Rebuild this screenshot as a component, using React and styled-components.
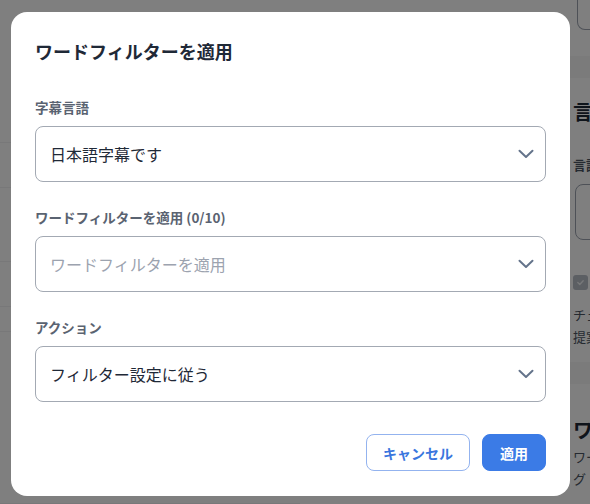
import React from "react";
import styled, { createGlobalStyle } from "styled-components";

const Global = createGlobalStyle`
  html, body { margin: 0; padding: 0; background: #ffffff; }
  body { font-family: "Noto Sans CJK JP", "Noto Sans", sans-serif; }
  * { box-sizing: border-box; }
`;

const Page = styled.div`
  width: 590px;
  height: 504px;
  display: flex;
  overflow: hidden;
  background: #ffffff;
`;

const LeftList = styled.div`
  width: 300px;
  display: flex;
  flex-direction: column;
  padding-top: 56px;
`;

const ListRow = styled.div`
  height: ${(p) => p.$h}px;
  border-bottom: 1px solid #f0f0f2;
`;

const Spacer = styled.div`
  flex: 1;
`;

const RightPanel = styled.div`
  margin-left: auto;
  width: 20px;
  display: flex;
  flex-direction: column;
  padding-left: 3px;
  overflow: hidden;
  white-space: nowrap;
  color: #1f2937;
`;

const TopBox = styled.div`
  height: 30px;
  margin-left: 4px;
  width: 40px;
  border: 1px solid #9ca3af;
  border-top: none;
  border-radius: 0 0 8px 8px;
  margin-bottom: 26px;
`;

const Band = styled.div`
  height: 22px;
  margin-left: -3px;
  width: 40px;
  background: #f6f6f7;
  margin-bottom: ${(p) => p.$mb}px;
`;

const PanelHeading = styled.div`
  font-size: 20px;
  font-weight: 700;
  line-height: 26px;
  margin-bottom: ${(p) => p.$mb}px;
`;

const PanelText = styled.div`
  font-size: 13px;
  line-height: ${(p) => p.$lh || 22}px;
  color: #4b5563;
  font-weight: ${(p) => p.$w || 400};
  margin-bottom: ${(p) => p.$mb || 0}px;
`;

const PanelInput = styled.div`
  height: 56px;
  width: 40px;
  margin-left: 2px;
  border: 1px solid #9ca3af;
  border-radius: 8px;
  margin-bottom: 35px;
`;

const Check = styled.div`
  width: 15px;
  height: 15px;
  border-radius: 3px;
  background: #b9bec7;
  display: flex;
  align-items: center;
  justify-content: center;
  margin-bottom: 14px;
`;

const Overlay = styled.div`
  position: fixed;
  inset: 0;
  background: rgba(0, 0, 0, 0.5);
  display: flex;
  align-items: flex-start;
  padding: 12px 0 0 11px;
`;

const Modal = styled.div`
  width: 559px;
  background: #ffffff;
  border-radius: 16px;
  padding: 24px 24px 25px 24px;
  display: flex;
  flex-direction: column;
`;

const Title = styled.h2`
  margin: 0 0 31px 0;
  font-size: 18px;
  line-height: 30px;
  font-weight: 700;
  color: #1f2937;
`;

const Form = styled.div`
  display: flex;
  flex-direction: column;
  gap: 25px;
`;

const Field = styled.div`
  display: flex;
  flex-direction: column;
`;

const Label = styled.label`
  font-size: 13.5px;
  line-height: 20px;
  font-weight: 700;
  color: #5a6371;
  margin-bottom: 9px;
`;

const SelectBox = styled.div`
  height: 56px;
  border: 1px solid #a3a9b3;
  border-radius: 8px;
  display: flex;
  align-items: center;
  justify-content: space-between;
  padding: 0 11px 0 14px;
`;

const Value = styled.span`
  font-size: 16px;
  color: ${(p) => (p.$placeholder ? "#9ca3af" : "#1f2937")};
`;

const Footer = styled.div`
  margin-top: 32px;
  display: flex;
  justify-content: flex-end;
  gap: 12px;
`;

const Button = styled.button`
  height: 37px;
  border-radius: 8px;
  font-family: inherit;
  font-size: 14px;
  font-weight: 700;
  padding: 0 ${(p) => (p.$primary ? 17 : 16)}px;
  cursor: pointer;
  border: 1px solid ${(p) => (p.$primary ? "#3b7be6" : "#93b3ef")};
  background: ${(p) => (p.$primary ? "#3b7be6" : "#ffffff")};
  color: ${(p) => (p.$primary ? "#ffffff" : "#3a76de")};
`;

const Chevron = () => (
  <svg width="16" height="10" viewBox="0 0 16 10" fill="none">
    <path d="M1.5 1.8 L8 8 L14.5 1.8" stroke="#64748b" strokeWidth="2" strokeLinecap="round" strokeLinejoin="round" />
  </svg>
);

const fields = [
  { label: "字幕言語", value: "日本語字幕です" },
  { label: "ワードフィルターを適用 (0/10)", value: "ワードフィルターを適用", placeholder: true },
  { label: "アクション", value: "フィルター設定に従う" },
];

export default function App() {
  return (
    <>
      <Global />
      <Page>
        <LeftList>
          <ListRow $h={87} />
          <ListRow $h={45} />
          <ListRow $h={74} />
          <ListRow $h={45} />
          <ListRow $h={25} />
          <Spacer />
          <ListRow $h={14} />
        </LeftList>
        <RightPanel>
          <TopBox />
          <Band $mb={21} />
          <PanelHeading $mb={29}>言語設定</PanelHeading>
          <PanelText $w={700} $mb={8}>言語</PanelText>
          <PanelInput />
          <Check>
            <svg width="9" height="9" viewBox="0 0 10 10" fill="none">
              <path d="M2 5 L4.2 7.2 L8 3" stroke="#eef0f3" strokeWidth="1.5" strokeLinecap="round" strokeLinejoin="round" />
            </svg>
          </Check>
          <PanelText>チェック</PanelText>
          <PanelText $mb={14}>提案</PanelText>
          <Band $mb={33} />
          <PanelHeading $mb={3}>ワード</PanelHeading>
          <PanelText>ワード</PanelText>
          <PanelText>グ</PanelText>
        </RightPanel>
      </Page>
      <Overlay>
        <Modal>
          <Title>ワードフィルターを適用</Title>
          <Form>
            {fields.map((f) => (
              <Field key={f.label}>
                <Label>{f.label}</Label>
                <SelectBox>
                  <Value $placeholder={f.placeholder}>{f.value}</Value>
                  <Chevron />
                </SelectBox>
              </Field>
            ))}
          </Form>
          <Footer>
            <Button>キャンセル</Button>
            <Button $primary>適用</Button>
          </Footer>
        </Modal>
      </Overlay>
    </>
  );
}
